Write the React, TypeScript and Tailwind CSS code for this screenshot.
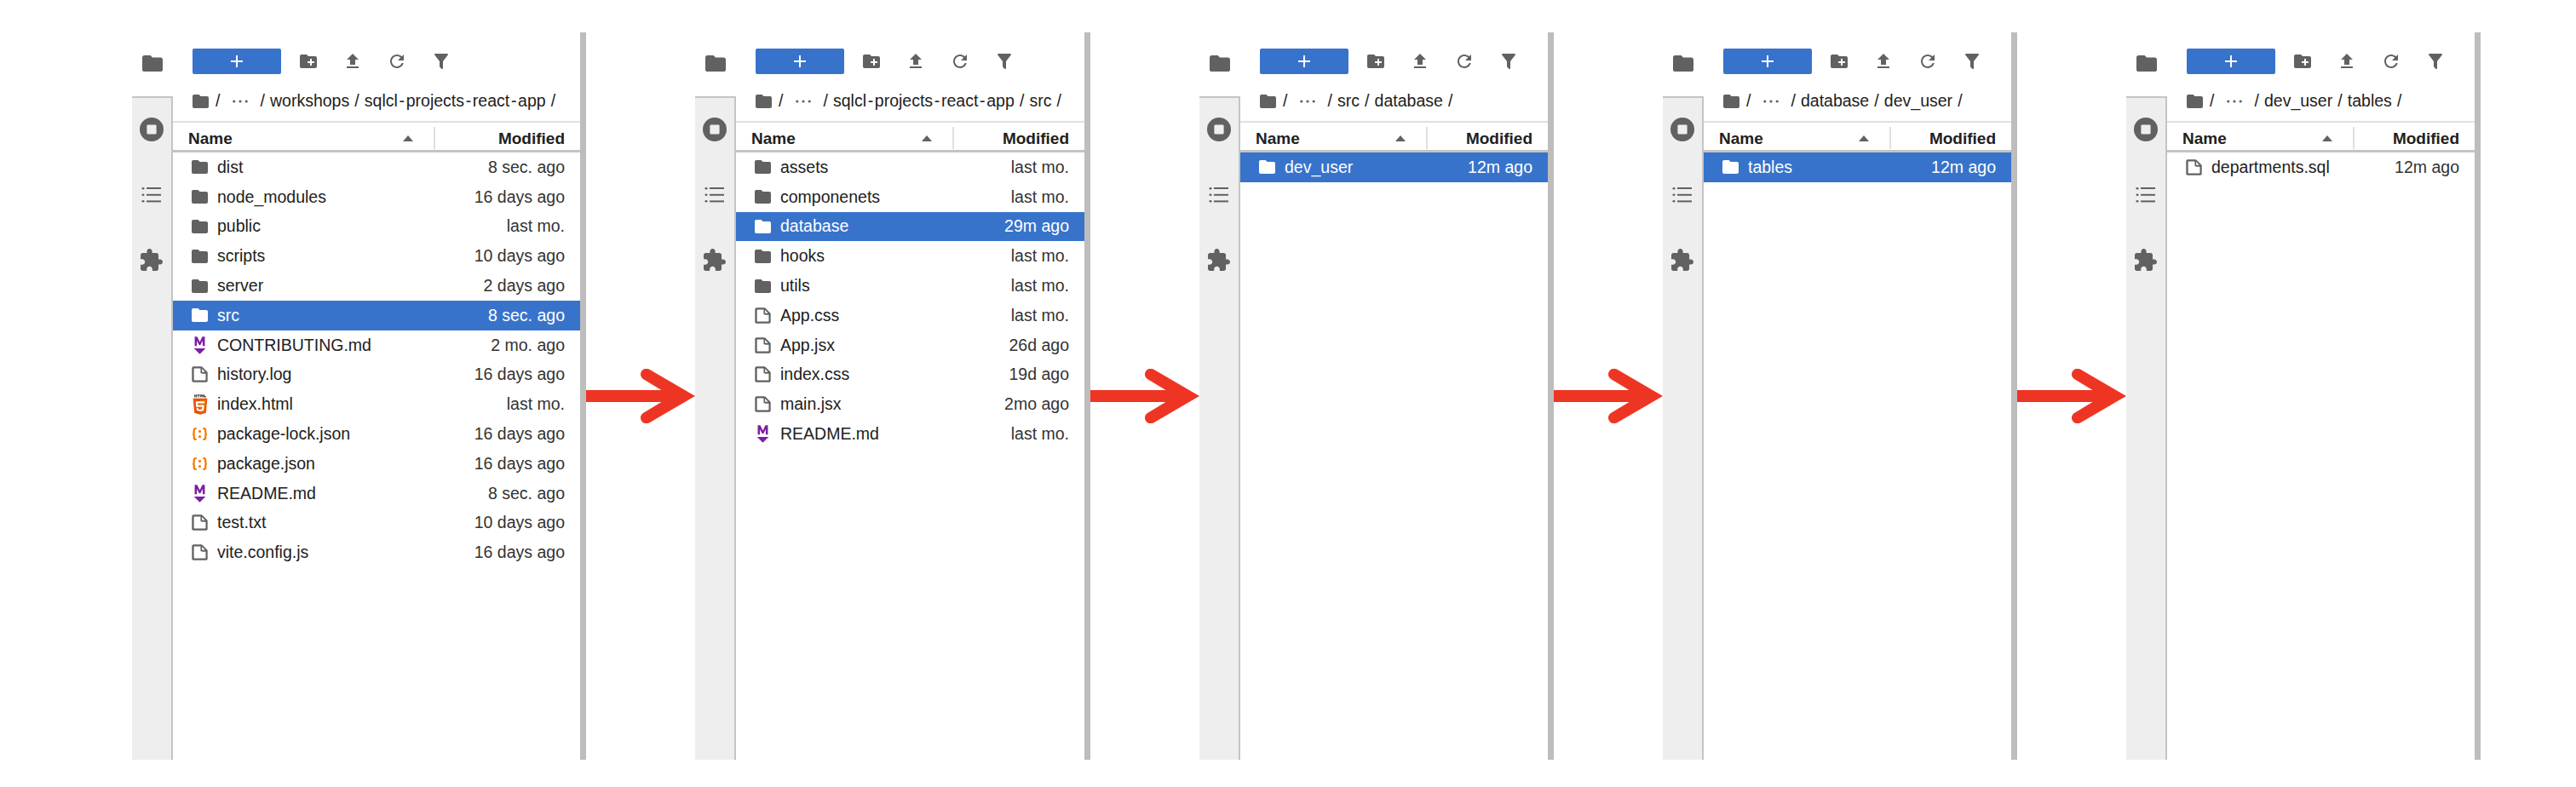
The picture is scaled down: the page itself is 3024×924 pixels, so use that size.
import React from "react";

const FOLDER = "M10 4H4c-1.1 0-1.99.9-1.99 2L2 18c0 1.1.9 2 2 2h16c1.1 0 2-.9 2-2V8c0-1.1-.9-2-2-2h-8l-2-2z";

function FolderIcon({ className }: { className: string }) {
  return (
    <svg viewBox="2 4 20 16" preserveAspectRatio="none" className={className} fill="currentColor">
      <path d={FOLDER} />
    </svg>
  );
}

function FileIcon() {
  return (
    <svg viewBox="2 2 18 18" className="w-[19px] h-[19px] text-[#616161]" fill="currentColor">
      <path d="M19.3 8.2l-5.5-5.5c-.3-.3-.7-.5-1.2-.5H3.9c-.8.1-1.6.9-1.6 1.8v14.1c0 .9.7 1.6 1.6 1.6h14.2c.9 0 1.6-.7 1.6-1.6V9.4c.1-.5-.1-.9-.4-1.2zm-5.8-3.3l3.4 3.6h-3.4V4.9zm3.9 12.7H4.7c-.1 0-.2 0-.2-.2V4.7c0-.2.1-.3.2-.3h7.2v4.4s0 .8.3 1.1c.3.3 1.1.3 1.1.3h4.3v7.2s-.1.2-.2.2z" />
    </svg>
  );
}

function MarkdownIcon() {
  return (
    <svg viewBox="0 0 20 24" className="w-[17px] h-[21px]" fill="#7b1fa2">
      <path d="M3 0h3.4L10 7.2 13.6 0H17v13h-3V5.6l-3.2 6.2H9.2L6 5.6V13H3z" />
      <path d="M2 16h16l-8 8z" />
    </svg>
  );
}

function HtmlIcon() {
  return (
    <svg viewBox="60 0 392 512" className="w-[18px] h-[24px]">
      <path fill="#333" d="M108.4 0h23v22.8h21.2V0h23v69h-23v-23h-21v23h-23.2M206 23h-20.3V0h63.7v23H229v46h-23M259.5 0h24.1l14.8 24.3L313.2 0h24.1v69h-23V34.8l-16.1 24.8l-16.1-24.8v34.2h-22.6M348.7 0h23v46.2h32.6V69h-55.6" />
      <path fill="#e65100" d="M107.6 471l-33-370.4h362.8l-33 370.2L255.7 512" />
      <path fill="#ef6c00" d="M256 480.5V131h148.3L376 447" />
      <path fill="#fff" d="M142 176.3h228l-6 46.5H192l4 43h161l-12.4 138.5L256 430l-88.6-25-6-68h43.4l3 34.6 48.2 13 48.2-13 5-56.1H149.7z" />
    </svg>
  );
}

function JsonIcon() {
  return (
    <svg viewBox="0 0 20 16" className="w-[19px] h-[15px]" fill="none" stroke="#f57c00" strokeWidth="2.4" strokeLinecap="round">
      <path d="M5 1.2C3 1.2 2.8 2.2 2.8 3.6v2.2C2.8 7 2.2 8 1.1 8c1.1 0 1.7 1 1.7 2.2v2.2c0 1.4.2 2.4 2.2 2.4" />
      <path d="M15 1.2c2 0 2.2 1 2.2 2.4v2.2c0 1.2.6 2.2 1.7 2.2-1.1 0-1.7 1-1.7 2.2v2.2c0 1.4-.2 2.4-2.2 2.4" />
      <path d="M10 4.6v.1M10 11.3v.1" strokeWidth="3.2" />
    </svg>
  );
}

type Kind = "folder" | "file" | "md" | "html" | "json";
type Row = { name: string; date: string; kind: Kind; sel?: boolean };

function RowIcon({ kind, sel }: { kind: Kind; sel?: boolean }) {
  if (kind === "folder")
    return <FolderIcon className={sel ? "w-[19px] h-[16px] text-white" : "w-[19px] h-[16px] text-[#616161]"} />;
  if (kind === "md") return <MarkdownIcon />;
  if (kind === "html") return <HtmlIcon />;
  if (kind === "json") return <JsonIcon />;
  return <FileIcon />;
}

function FileRow({ row }: { row: Row }) {
  return (
    <div className={row.sel ? "flex items-center h-[34.8px] bg-[#3873cb] text-white" : "flex items-center h-[34.8px] text-[#212121]"}>
      <div className="w-[52px] shrink-0 pl-[22px] flex justify-start">
        <div className="w-[19px] flex items-center justify-center">
          <RowIcon kind={row.kind} sel={row.sel} />
        </div>
      </div>
      <span className="flex-1 truncate">{row.name}</span>
      <span className={row.sel ? "pr-[18px] text-white" : "pr-[18px] text-[#333333]"}>{row.date}</span>
    </div>
  );
}

function Toolbar() {
  const icon = "w-[24px] h-[24px] text-[#616161]";
  return (
    <div className="flex items-center h-[30px] mt-[19px] pl-[23px]">
      <div className="w-[104px] h-[30px] bg-[#3873cb] rounded-[2px] flex items-center justify-center">
        <svg viewBox="0 0 24 24" className="w-[24px] h-[24px]" fill="white">
          <path d="M19 13h-6v6h-2v-6H5v-2h6V5h2v6h6v2z" />
        </svg>
      </div>
      <div className="ml-[20px] flex items-center gap-[28px]">
        <svg viewBox="0 0 24 24" className={icon} fill="currentColor">
          <path d="M20 6h-8l-2-2H4c-1.11 0-1.99.89-1.99 2L2 18c0 1.11.89 2 2 2h16c1.11 0 2-.89 2-2V8c0-1.11-.89-2-2-2zm-1 8h-3v3h-2v-3h-3v-2h3V9h2v3h3v2z" />
        </svg>
        <svg viewBox="0 0 24 24" className={icon} fill="currentColor">
          <path d="M9 16h6v-6h4l-7-7-7 7h4zm-4 2h14v2H5z" />
        </svg>
        <svg viewBox="0 0 24 24" className={icon} fill="currentColor">
          <path d="M17.65 6.35C16.2 4.9 14.21 4 12 4c-4.42 0-7.99 3.58-7.99 8s3.57 8 7.99 8c3.73 0 6.84-2.55 7.73-6h-2.08c-.82 2.33-3.04 4-5.65 4-3.31 0-6-2.69-6-6s2.69-6 6-6c1.66 0 3.14.69 4.22 1.78L13 11h7V4l-2.35 2.35z" />
        </svg>
        <svg viewBox="0 0 24 24" className={icon} fill="currentColor">
          <path d="M14 12v7.88c.04.3-.06.62-.29.83-.39.39-1.02.39-1.41 0l-2.01-2.01c-.23-.23-.33-.54-.29-.83V12h-.03L4.21 4.62c-.34-.43-.26-1.06.17-1.4.19-.14.4-.22.62-.22h14c.22 0 .43.08.62.22.43.34.51.97.17 1.4L14.03 12H14z" />
        </svg>
      </div>
    </div>
  );
}

function Sidebar() {
  return (
    <div className="w-[48px] shrink-0 flex flex-col">
      <div className="h-[75px] flex items-end justify-center pb-[29px]">
        <FolderIcon className="w-[24px] h-[19px] text-[#616161]" />
      </div>
      <div className="flex-1 bg-[#eeeeee] border-t-2 border-r-2 border-[#c4c4c4] flex flex-col items-center pr-[1px]">
        <svg viewBox="2 2 20 20" className="mt-[23px] w-[28px] h-[28px] text-[#616161]" fill="currentColor">
          <path fillRule="evenodd" d="M12 2a10 10 0 1 0 0 20 10 10 0 0 0 0-20zM9 8h6a1 1 0 0 1 1 1v6a1 1 0 0 1-1 1H9a1 1 0 0 1-1-1V9a1 1 0 0 1 1-1z" />
        </svg>
        <svg viewBox="0 0 24 20" className="mt-[53px] w-[24px] h-[20px] text-[#616161]" fill="currentColor">
          <rect x="0.5" y="1" width="3" height="2.6" rx="1.3" />
          <rect x="6" y="1" width="17" height="2" />
          <rect x="0.5" y="8.5" width="3" height="2.6" rx="1.3" />
          <rect x="6" y="8.8" width="17" height="2" />
          <rect x="0.5" y="16" width="3" height="2.6" rx="1.3" />
          <rect x="6" y="16.4" width="17" height="2" />
        </svg>
        <svg viewBox="2 1 21 21" className="mt-[53px] w-[26px] h-[26px] text-[#616161]" fill="currentColor">
          <path d="M20.5 11H19V7c0-1.1-.9-2-2-2h-4V3.5C13 2.12 11.88 1 10.5 1S8 2.12 8 3.5V5H4c-1.1 0-1.99.9-1.99 2v3.8H3.5c1.49 0 2.7 1.21 2.7 2.7s-1.21 2.7-2.7 2.7H2V20c0 1.1.9 2 2 2h3.8v-1.5c0-1.49 1.21-2.7 2.7-2.7 1.49 0 2.7 1.21 2.7 2.7V22H17c1.1 0 2-.9 2-2v-4h1.5c1.38 0 2.5-1.12 2.5-2.5S21.88 11 20.5 11z" />
        </svg>
      </div>
    </div>
  );
}

function PathText({ path }: { path: string }) {
  const parts = path.split("-");
  return (
    <>
      {parts.map((p, i) => (
        <React.Fragment key={i}>
          {i > 0 && <span className="mx-[1.7px]">-</span>}
          {p}
        </React.Fragment>
      ))}
    </>
  );
}

function Breadcrumb({ path }: { path: string }) {
  return (
    <div className="h-[57px] pt-[9px] border-b-2 border-[#e0e0e0] flex items-center pl-[23px] text-[19.5px] text-[#212121] whitespace-pre">
      <FolderIcon className="w-[19px] h-[16px] text-[#616161] shrink-0" />
      <span className="ml-[8px]">/</span>
      <svg viewBox="0 0 20 4" className="ml-[15px] w-[18px] h-[4px] text-[#616161]" fill="currentColor">
        <circle cx="2" cy="2" r="1.8" />
        <circle cx="10" cy="2" r="1.8" />
        <circle cx="18" cy="2" r="1.8" />
      </svg>
      <span className="ml-[14px] [word-spacing:0.7px]">
        <PathText path={path} />
      </span>
    </div>
  );
}

function Panel({ width, colWidth, path, rows }: { width: string; colWidth: string; path: string; rows: Row[] }) {
  return (
    <div className={`${width} shrink-0 h-[854px] flex`}>
      <Sidebar />
      <div className="flex-1 min-w-0 flex flex-col font-['Liberation_Sans',sans-serif] text-[19.5px]">
        <Toolbar />
        <Breadcrumb path={path} />
        <div className="h-[35px] pt-[4px] flex items-center border-b-[3px] border-[#c4c4c4] font-bold text-[19px] text-[#212121]">
          <span className="flex-1 pl-[18px] pt-[2px]">Name</span>
          <div className="w-[12px] h-[7px] mr-[24px] mt-[1px] border-x-[6px] border-b-[7px] border-x-transparent border-b-[#616161]" />
          <div className={`${colWidth} h-[26px] border-l-2 border-[#e0e0e0] flex items-center justify-end pr-[18px] pt-[2px]`}>Modified</div>
        </div>
        <div className="flex flex-col">
          {rows.map((r) => (
            <FileRow key={r.name} row={r} />
          ))}
        </div>
      </div>
      <div className="w-[7px] shrink-0 bg-[#bdbdbd]" />
    </div>
  );
}

function Arrow() {
  return (
    <div className="w-[128px] shrink-0 h-[854px] flex items-start pt-[395px]">
      <svg viewBox="0 0 128 64" className="w-full h-[64px]">
        <rect x="0" y="25" width="100" height="14" fill="#ee3524" />
        <path d="M128 32L74 0.6c-3-1.6-7-1-9 2.4-2 3.4-1 7 2 9L100 32 67 52c-3 2-4 5.6-2 9 2 3.4 6 4 9 2.4z" fill="#ee3524" />
      </svg>
    </div>
  );
}

const p1: Row[] = [
  { name: "dist", date: "8 sec. ago", kind: "folder" },
  { name: "node_modules", date: "16 days ago", kind: "folder" },
  { name: "public", date: "last mo.", kind: "folder" },
  { name: "scripts", date: "10 days ago", kind: "folder" },
  { name: "server", date: "2 days ago", kind: "folder" },
  { name: "src", date: "8 sec. ago", kind: "folder", sel: true },
  { name: "CONTRIBUTING.md", date: "2 mo. ago", kind: "md" },
  { name: "history.log", date: "16 days ago", kind: "file" },
  { name: "index.html", date: "last mo.", kind: "html" },
  { name: "package-lock.json", date: "16 days ago", kind: "json" },
  { name: "package.json", date: "16 days ago", kind: "json" },
  { name: "README.md", date: "8 sec. ago", kind: "md" },
  { name: "test.txt", date: "10 days ago", kind: "file" },
  { name: "vite.config.js", date: "16 days ago", kind: "file" },
];
const p2: Row[] = [
  { name: "assets", date: "last mo.", kind: "folder" },
  { name: "componenets", date: "last mo.", kind: "folder" },
  { name: "database", date: "29m ago", kind: "folder", sel: true },
  { name: "hooks", date: "last mo.", kind: "folder" },
  { name: "utils", date: "last mo.", kind: "folder" },
  { name: "App.css", date: "last mo.", kind: "file" },
  { name: "App.jsx", date: "26d ago", kind: "file" },
  { name: "index.css", date: "19d ago", kind: "file" },
  { name: "main.jsx", date: "2mo ago", kind: "file" },
  { name: "README.md", date: "last mo.", kind: "md" },
];
const p3: Row[] = [{ name: "dev_user", date: "12m ago", kind: "folder", sel: true }];
const p4: Row[] = [{ name: "tables", date: "12m ago", kind: "folder", sel: true }];
const p5: Row[] = [{ name: "departments.sql", date: "12m ago", kind: "file" }];

export default function App() {
  return (
    <div className="w-[3024px] h-[924px] bg-white pl-[155px] pt-[38px] flex items-start overflow-hidden">
      <Panel width="w-[533px]" colWidth="w-[172px]" path="/ workshops / sqlcl-projects-react-app /" rows={p1} />
      <Arrow />
      <Panel width="w-[464px]" colWidth="w-[155px]" path="/ sqlcl-projects-react-app / src /" rows={p2} />
      <Arrow />
      <Panel width="w-[416px]" colWidth="w-[143px]" path="/ src / database /" rows={p3} />
      <Arrow />
      <Panel width="w-[416px]" colWidth="w-[143px]" path="/ database / dev_user /" rows={p4} />
      <Arrow />
      <Panel width="w-[416px]" colWidth="w-[143px]" path="/ dev_user / tables /" rows={p5} />
    </div>
  );
}
